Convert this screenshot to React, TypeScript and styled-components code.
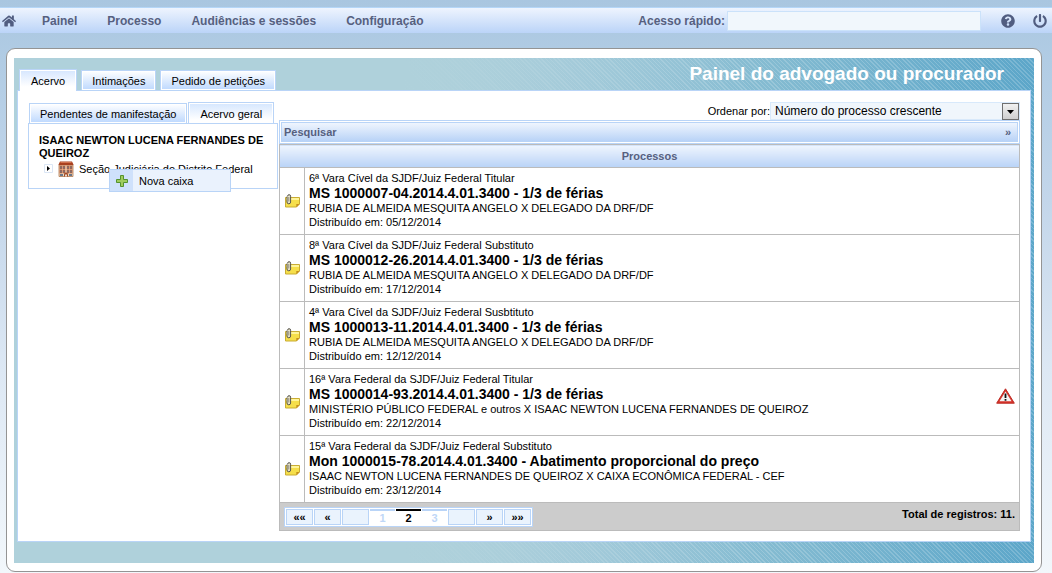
import React from 'react';
import styled, { createGlobalStyle } from 'styled-components';
import { FaHome, FaPowerOff, FaQuestionCircle } from 'react-icons/fa';

const line = '#b9d4f7';
const grid = '#bbbbbb';
const ink = '#56607f';
const bar = 'linear-gradient(#eff5fe, #b9d3f7)';

const GlobalStyle = createGlobalStyle`
  * { box-sizing: border-box; }
  body {
    margin: 0;
    min-height: 100vh;
    background: #f2f7fb linear-gradient(#a9c6e0 0, #b1cce4 60px, #c3d6ea 200px, #dde8f4 370px, #f2f7fb 573px) no-repeat;
    font: 11px/14px "Liberation Sans", Arial, sans-serif;
    color: #000;
  }
  button, input, select { font: inherit; color: inherit; margin: 0; }
`;

const Header = styled.header`
  margin-top: 7px;
  height: 26px;
  padding: 0 5px 0 2px;
  display: flex;
  align-items: center;
  border-top: 1px solid #b4d6f8;
  background: linear-gradient(#eef4fe, #bbd4f8);
  color: ${ink};
  font-size: 12px;
  font-weight: bold;
`;

const Menu = styled.nav`
  flex: 1;
  display: flex;
  align-items: center;
  gap: 30px;
`;

const MenuLink = styled.a`
  color: inherit;
  text-decoration: none;
`;

const IconLink = styled.a`
  display: flex;
  color: #515d80;
`;

const HomeLink = styled(IconLink)`
  margin-right: -4px;
`;

const QuickLabel = styled.label`
  margin-right: 2px;
`;

const QuickInput = styled.input`
  width: 254px;
  height: 20px;
  border: 1px solid #cbe2fa;
  background: #f1f7fc;
  padding: 0 4px;
  font-weight: normal;
`;

const Tools = styled.div`
  display: flex;
  gap: 18px;
  margin-left: 20px;
`;

const Sheet = styled.main`
  margin: 15px 10px 1px 6px;
  padding: 9px 7px 8px;
  border: 1px solid #949494;
  border-radius: 9px;
  background: #fff;
`;

const Banner = styled.div`
  padding: 0 3px 21px;
  background:
    linear-gradient(90deg, #afd1db 38%, transparent 72%),
    repeating-linear-gradient(45deg, rgba(255, 255, 255, 0.18) 0 1px, transparent 1px 3px),
    linear-gradient(90deg, #afd1db 35%, #9cc6d9 52%, #84bbd1 74%, #5ca6c9 100%);
`;

const BannerTop = styled.div`
  height: 32px;
  padding: 0 27px 0 2px;
  display: flex;
  justify-content: space-between;
  align-items: flex-end;
`;

const Title = styled.h1`
  margin: 0;
  align-self: center;
  font-size: 19px;
  line-height: 30px;
  color: #fff;
`;

const Tabs = styled.div`
  position: relative;
  display: flex;
  align-items: flex-end;
  gap: 4px;
  margin-bottom: -1px;
`;

const Tab = styled.button<{ $active?: boolean }>`
  height: ${p => (p.$active ? 22 : 20)}px;
  padding: 0 ${p => (p.$active ? 11 : 10)}px;
  margin-bottom: ${p => (p.$active ? 0 : 1)}px;
  border: 1px solid ${line};
  border-bottom: 0;
  background: ${p => (p.$active ? 'linear-gradient(#d5e6fe, #fff 80%)' : 'linear-gradient(#fff, #bdd8fe)')};
  box-shadow: inset 0 0 0 1px #fff;
`;

const Body = styled.div`
  border: 1px solid ${line};
  background: #fff;
  padding: 11px 10px 10px;
  display: grid;
  grid-template-columns: 250px minmax(0, 1fr);
  gap: 1px;
  align-items: start;
`;

const TreeTabs = styled(Tabs)`
  padding-left: 1px;
  gap: 1px;
`;

const TreeBox = styled.div`
  position: relative;
  height: 66px;
  padding: 10px;
  border: 1px solid ${line};
`;

const Owner = styled.div`
  font-weight: bold;
  line-height: 13px;
`;

const TreeRow = styled.div`
  display: flex;
  align-items: center;
  gap: 5px;
  height: 17px;
  margin-left: 5px;
`;

const Expander = styled.button`
  display: flex;
  padding: 0;
  border: 0;
  background: none;
`;

const ContextMenu = styled.div`
  position: absolute;
  left: 80px;
  top: 45px;
  width: 122px;
  border: 1px solid ${line};
  background: #eaf2fd;
`;

const ContextItem = styled.button`
  width: 100%;
  height: 21px;
  display: flex;
  align-items: center;
  padding: 0;
  border: 0;
  background: none;
`;

const ContextIcon = styled.span`
  width: 23px;
  height: 21px;
  margin-right: 6px;
  display: flex;
  align-items: center;
  justify-content: center;
  background: #cfe1fb;
`;

const SortRow = styled.div`
  display: flex;
  justify-content: flex-end;
  align-items: center;
`;

const SelectWrap = styled.div`
  position: relative;
  width: 250px;
`;

const SortSelect = styled.select`
  display: block;
  appearance: none;
  width: 100%;
  height: 18px;
  padding: 0 20px 0 4px;
  border: 1px solid #d8e9fb;
  border-radius: 0;
  background: #f0f6fc;
  font-size: 12px;
`;

const SelectArrow = styled.span`
  position: absolute;
  right: 1px;
  top: 1px;
  width: 17px;
  height: 17px;
  border: 1px solid #6f6f6f;
  background: linear-gradient(#f1f1f1, #cfcfcf);
  display: flex;
  align-items: center;
  justify-content: center;
  pointer-events: none;
`;

const SearchFrame = styled.div`
  border: 1px solid ${line};
  padding: 1px;
`;

const SearchBar = styled.button`
  width: 100%;
  height: 20px;
  padding: 0 6px 0 2px;
  display: flex;
  align-items: center;
  justify-content: space-between;
  border: 1px solid ${line};
  background: ${bar};
  color: ${ink};
  font-weight: bold;
`;

const Table = styled.table`
  width: 100%;
  border-collapse: collapse;

  td, th { border: 1px solid ${grid}; padding: 0; }
  th {
    height: 23px;
    background: ${bar};
    color: ${ink};
  }
`;

const ClipCell = styled.td`
  width: 25px;

  svg { display: block; margin: 0 auto; }
`;

const CaseLayout = styled.div`
  display: flex;
  align-items: center;
  justify-content: space-between;
  padding: 3px 4px 5px;
`;

const CaseName = styled.a`
  display: block;
  font-size: 14px;
  line-height: 16px;
  font-weight: bold;
  color: #000;
  text-decoration: none;
`;

const Alert = styled.span`
  display: flex;
  padding-bottom: 10px;
`;

const Footer = styled.div`
  display: flex;
  justify-content: space-between;
  align-items: flex-start;
  height: 27px;
  padding: 4px;
  background: #cccccc;
  font-weight: bold;
`;

const Pager = styled.div`
  display: flex;
  gap: 1px;
  padding: 1px;
  border: 1px solid ${line};
  background: #fff;
`;

const Step = styled.button`
  width: 27px;
  height: 16px;
  padding: 0;
  border: 1px solid ${line};
  background: #eaf3fd;
  font-weight: bold;
  line-height: 14px;
`;

const PageNumber = styled.button<{ $current?: boolean }>`
  width: 25px;
  height: 16px;
  padding: 0;
  border: 0;
  border-top: 2px solid ${p => (p.$current ? '#000' : line)};
  background: #fff;
  color: ${p => (p.$current ? '#000' : '#bfd7f7')};
  font-weight: bold;
`;

const NoteIcon = () => (
  <svg width="16" height="14" viewBox="0 0 16 14" aria-hidden="true">
    <path d="M1.500 3.500h14v6.500l-3 3h-11z" fill="#f6df4a" stroke="#c9ac33" />
    <path d="M2 4h13v2H2z" fill="#fff59a" />
    <path d="M12.300 13.300v-3.300h3.300z" fill="#c58f1c" />
    <path d="M3 2.500v5.500a1.800 1.800 0 0 0 3.600 0V2.200a1.500 1.500 0 0 0-3 0" fill="#e9e4c8" stroke="#55524a" />
    <path d="M4.800 3v4.500" stroke="#77736a" strokeWidth=".8" />
  </svg>
);

const BuildingIcon = () => (
  <svg width="16" height="16" viewBox="0 0 16 16" aria-hidden="true">
    <path d="M1 4h14v11.500H1z" fill="#efd8bd" stroke="#b07a50" strokeWidth=".8" />
    <path d="M2 .5h12l1.700 3.500H.3z" fill="#a9401f" />
    <path d="M2.500 1.500h11" stroke="#d27450" />
    {[5, 9].map(y => [2, 5, 9, 12].map(x => (
      <rect key={`${x}-${y}`} x={x} y={y} width="2" height="3" fill="#6b7787" stroke="#c0552b" strokeWidth=".6" />
    )))}
    <path d="M6 15.500v-2a2 2 0 0 1 4 0v2z" fill="#a34a27" />
    <path d="M7 15.500v-2h2v2z" fill="#e9dccd" />
    <path d="M2 13h3v2H2zM11 13h3v2h-3z" fill="#6b7787" />
  </svg>
);

const WarningIcon = () => (
  <svg width="19" height="16" viewBox="0 0 19 16" aria-label="Alerta" role="img">
    <path d="M9.500 .8 18.300 15.200H.7z" fill="#d8322a" stroke="#bb2a23" strokeWidth="1" strokeLinejoin="round" />
    <path d="M9.500 3.500 15.500 13.300H3.500z" fill="#f4f4f4" />
    <path d="M9.500 5.500v4.500M9.500 11v1.800" stroke="#111" strokeWidth="1.800" />
  </svg>
);

const PlusIcon = () => (
  <svg width="12" height="12" viewBox="0 0 12 12" aria-hidden="true">
    <path d="M4.500 .5h3v4h4v3h-4v4h-3v-4h-4v-3h4z" fill="#9fcc5d" stroke="#54922f" />
  </svg>
);

const cases = [
  ['6ª Vara Cível da SJDF/Juiz Federal Titular', 'MS 1000007-04.2014.4.01.3400 - 1/3 de férias', 'RUBIA DE ALMEIDA MESQUITA ANGELO X DELEGADO DA DRF/DF', '05/12/2014'],
  ['8ª Vara Cível da SJDF/Juiz Federal Substituto', 'MS 1000012-26.2014.4.01.3400 - 1/3 de férias', 'RUBIA DE ALMEIDA MESQUITA ANGELO X DELEGADO DA DRF/DF', '17/12/2014'],
  ['4ª Vara Cível da SJDF/Juiz Federal Susbtituto', 'MS 1000013-11.2014.4.01.3400 - 1/3 de férias', 'RUBIA DE ALMEIDA MESQUITA ANGELO X DELEGADO DA DRF/DF', '12/12/2014'],
  ['16ª Vara Federal da SJDF/Juiz Federal Titular', 'MS 1000014-93.2014.4.01.3400 - 1/3 de férias', 'MINISTÉRIO PÚBLICO FEDERAL e outros X ISAAC NEWTON LUCENA FERNANDES DE QUEIROZ', '22/12/2014', 'alerta'],
  ['15ª Vara Federal da SJDF/Juiz Federal Substituto', 'Mon 1000015-78.2014.4.01.3400 - Abatimento proporcional do preço', 'ISAAC NEWTON LUCENA FERNANDES DE QUEIROZ X CAIXA ECONÔMICA FEDERAL - CEF', '23/12/2014'],
];

export default function App() {
  return (
    <>
      <GlobalStyle />
      <Header>
        <Menu>
          <HomeLink href="#" aria-label="Início"><FaHome size={14} /></HomeLink>
          <MenuLink href="#">Painel</MenuLink>
          <MenuLink href="#">Processo</MenuLink>
          <MenuLink href="#">Audiências e sessões</MenuLink>
          <MenuLink href="#">Configuração</MenuLink>
        </Menu>
        <QuickLabel htmlFor="quick">Acesso rápido:</QuickLabel>
        <QuickInput id="quick" type="text" />
        <Tools>
          <IconLink href="#" aria-label="Ajuda"><FaQuestionCircle size={14} /></IconLink>
          <IconLink href="#" aria-label="Sair"><FaPowerOff size={14} /></IconLink>
        </Tools>
      </Header>
      <Sheet>
        <Banner>
          <BannerTop>
            <Tabs>
              <Tab $active>Acervo</Tab>
              <Tab>Intimações</Tab>
              <Tab>Pedido de petições</Tab>
            </Tabs>
            <Title>Painel do advogado ou procurador</Title>
          </BannerTop>
          <Body>
            <aside>
              <TreeTabs>
                <Tab>Pendentes de manifestação</Tab>
                <Tab $active>Acervo geral</Tab>
              </TreeTabs>
              <TreeBox>
                <Owner>ISAAC NEWTON LUCENA FERNANDES DE QUEIROZ</Owner>
                <TreeRow>
                  <Expander aria-label="Expandir">
                    <svg width="9" height="9" viewBox="0 0 9 9" aria-hidden="true">
                      <path d="M.5 .5h8v8h-8z" fill="#fff" stroke="#dbe6f5" />
                      <path d="M3 2l3 2.500-3 2.500z" fill="#000" />
                    </svg>
                  </Expander>
                  <BuildingIcon />
                  <span>Seção Judiciária do Distrito Federal</span>
                </TreeRow>
                <ContextMenu>
                  <ContextItem>
                    <ContextIcon><PlusIcon /></ContextIcon>
                    Nova caixa
                  </ContextItem>
                </ContextMenu>
              </TreeBox>
            </aside>
            <section>
              <SortRow>
                <label htmlFor="sort">Ordenar por:</label>
                <SelectWrap>
                  <SortSelect id="sort">
                    <option>Número do processo crescente</option>
                  </SortSelect>
                  <SelectArrow>
                    <svg width="7" height="4" viewBox="0 0 7 4" aria-hidden="true"><path d="M0 0h7L3.500 4z" /></svg>
                  </SelectArrow>
                </SelectWrap>
              </SortRow>
              <SearchFrame>
                <SearchBar><span>Pesquisar</span><span>»</span></SearchBar>
              </SearchFrame>
              <Table>
                <thead>
                  <tr><th colSpan={2}>Processos</th></tr>
                </thead>
                <tbody>
                  {cases.map(([court, name, parties, date, alert]) => (
                    <tr key={name}>
                      <ClipCell><NoteIcon /></ClipCell>
                      <td>
                        <CaseLayout>
                          <div>
                            <div>{court}</div>
                            <CaseName href="#">{name}</CaseName>
                            <div>{parties}</div>
                            <div>Distribuído em: {date}</div>
                          </div>
                          {alert && <Alert><WarningIcon /></Alert>}
                        </CaseLayout>
                      </td>
                    </tr>
                  ))}
                </tbody>
                <tfoot>
                  <tr>
                    <td colSpan={2}>
                      <Footer>
                        <Pager>
                          <Step>««</Step>
                          <Step>«</Step>
                          <Step aria-label="Voltar" />
                          <PageNumber>1</PageNumber>
                          <PageNumber $current>2</PageNumber>
                          <PageNumber>3</PageNumber>
                          <Step aria-label="Avançar" />
                          <Step>»</Step>
                          <Step>»»</Step>
                        </Pager>
                        <span>Total de registros: 11.</span>
                      </Footer>
                    </td>
                  </tr>
                </tfoot>
              </Table>
            </section>
          </Body>
        </Banner>
      </Sheet>
    </>
  );
}
